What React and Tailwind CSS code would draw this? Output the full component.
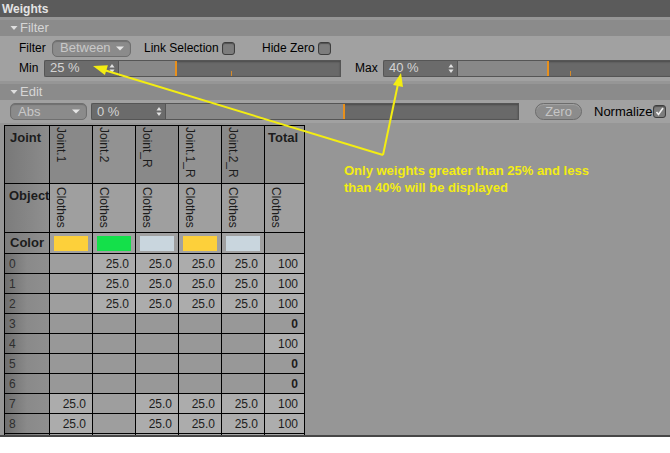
import React from 'react';

const YEL = '#f3ed12';

// weights per joint column, last value is the total
const rows = [
    [null, 25, 25, 25, 25, 100],
    [null, 25, 25, 25, 25, 100],
    [null, 25, 25, 25, 25, 100],
    [null, null, null, null, null, 0],
    [null, null, null, null, null, 100],
    [null, null, null, null, null, 0],
    [null, null, null, null, null, 0],
    [25, null, 25, 25, 25, 100],
    [25, null, 25, 25, 25, 100],
];

const joints = ['Joint.1', 'Joint.2', 'Joint_R', 'Joint.1_R', 'Joint.2_R'];
const swatches = ['#fdd03a', '#14e04a', '#c9d6de', '#fdd03a', '#c9d6de'];

const Tri = () => (
    <svg width="8" height="6" viewBox="0 0 8 6" className="mr-[2px]">
        <path d="M0.5 1 L7.5 1 L4 5 Z" fill="#dedede" />
    </svg>
);

const Stepper = () => (
    <svg width="6" height="11" viewBox="0 0 6 11">
        <path d="M0.5 4.5 L3 1 L5.5 4.5 Z" fill="#e2e2e2" />
        <path d="M0.5 6.5 L3 10 L5.5 6.5 Z" fill="#e2e2e2" />
    </svg>
);

const DropArrow = () => (
    <svg width="8" height="5" viewBox="0 0 8 5">
        <path d="M0 0.5 L8 0.5 L4 4.5 Z" fill="#e6e6e6" />
    </svg>
);

const GroupHeader = ({ label }) => (
    <div className="h-[19px] border-t-[3px] border-[#969696] bg-[#8b8b8b] flex items-center pl-[10px] text-[13px] text-[#d6d6d6]">
        <Tri />
        <span>{label}</span>
    </div>
);

const Dropdown = ({ label, className }) => (
    <div className={`shrink-0 h-[17px] rounded-[5px] border border-[#6f6f6f] bg-[#8b8b8b] shadow-[inset_0_1px_1px_rgba(0,0,0,0.2)] flex items-center justify-between pl-[7px] pr-[6px] text-[13px] text-[#c8c8c8] ${className}`}>
        <span>{label}</span>
        <DropArrow />
    </div>
);

const Checkbox = ({ checked }) => (
    <div className="shrink-0 w-[13px] h-[13px] rounded-[3px] border border-[#3e3e3e] bg-[#7d7d7d] shadow-[inset_0_1px_1px_rgba(0,0,0,0.35)] flex items-center justify-center">
        {checked && (
            <svg width="11" height="11" viewBox="0 0 11 11">
                <path d="M2.5 6 L4.5 8.5 L9 2" stroke="#f0f0f0" strokeWidth="1.6" fill="none" />
            </svg>
        )}
    </div>
);

// numeric field + slider track with an orange marker
const ValueSlider = ({ value, inputW, trackW, fill, tick }) => (
    <div className="flex h-[17px] shrink-0">
        <div className={`${inputW} shrink-0 h-full bg-[#6b6b6b] border border-[#555] border-r-0 rounded-l-[2px] flex items-center justify-between pl-[5px] pr-[3px] text-[13px] text-[#d4d4d4]`}>
            <span>{value}</span>
            <Stepper />
        </div>
        <div className={`${trackW} shrink-0 h-full relative bg-[#696969] border border-[#555] overflow-hidden shadow-[inset_0_1px_2px_rgba(0,0,0,0.3)]`}>
            <div className="absolute left-0 top-0 bottom-0 bg-[#888888]" style={{ width: fill }} />
            <div className="absolute top-0 bottom-0 w-[2px] bg-[#e8901c]" style={{ left: fill }} />
            {tick != null && <div className="absolute bottom-0 h-[5px] w-px bg-[#d58a2a]" style={{ left: tick }} />}
        </div>
    </div>
);

const cellBase = 'flex items-center justify-end pr-[6px] text-[#1c1c1c]';

export default function App() {
    return (
        <div className="relative w-[670px] h-[453px] overflow-hidden bg-white font-['Liberation_Sans',Arial,sans-serif] text-[12px]">
            {/* title */}
            <div className="h-[17px] bg-[#5b5b5b] flex items-center pl-[2px] text-[12px] font-bold text-[#e4e4e4]">
                Weights
            </div>

            <GroupHeader label="Filter" />
            <div className="h-[45px] bg-[#a1a1a1] pl-[19px] pt-[3px] flex flex-col gap-[2px] text-black overflow-hidden">
                <div className="flex items-center h-[18px]">
                    <span className="shrink-0 w-[33px]">Filter</span>
                    <Dropdown label="Between" className="w-[79px]" />
                    <span className="shrink-0 ml-[13px] w-[78px]">Link Selection</span>
                    <Checkbox />
                    <span className="shrink-0 ml-[27px] w-[56px]">Hide Zero</span>
                    <Checkbox />
                </div>
                <div className="flex items-center h-[18px]">
                    <span className="shrink-0 w-[25px]">Min</span>
                    <ValueSlider value="25 %" inputW="w-[74px]" trackW="w-[223px]" fill={56} tick={112} />
                    <span className="shrink-0 ml-[14px] w-[28px]">Max</span>
                    <ValueSlider value="40 %" inputW="w-[74px]" trackW="w-[240px]" fill={89} tick={112} />
                </div>
            </div>

            <GroupHeader label="Edit" />
            <div className="h-[23px] bg-[#a1a1a1] flex items-center pl-[10px] text-black overflow-hidden">
                <Dropdown label="Abs" className="w-[77px] mr-[4px]" />
                <ValueSlider value="0 %" inputW="w-[74px]" trackW="w-[354px]" fill={177} />
                <div className="shrink-0 ml-[16px] w-[47px] h-[17px] rounded-full border border-[#6c6c6c] bg-[#8c8c8c] shadow-[inset_0_1px_1px_rgba(255,255,255,0.2)] flex items-center justify-center text-[13px] text-[#c6c6c6]">
                    Zero
                </div>
                <span className="shrink-0 ml-[12px] w-[59px] text-[13px]">Normalize</span>
                <Checkbox checked />
            </div>

            {/* table panel */}
            <div className="h-[312px] bg-[#969696] pl-[4px] pt-[2px] overflow-hidden">
                <div className="w-[301px] grid grid-cols-[44px_42px_42px_42px_42px_42px_39px] grid-rows-[57px_48px_20px] auto-rows-[19px] gap-px bg-black border border-black text-[#1c1c1c]">
                    {/* joint row */}
                    <div className="bg-linear-to-r from-[#787878] to-[#8c8c8c] pl-[5px] pt-[2px] font-bold text-[13px]">Joint</div>
                    {joints.map((j, i) => (
                        <div key={j} className={`${i % 2 ? 'bg-[#929292]' : 'bg-[#898989]'} flex items-start pl-[4px] pt-[1px]`}>
                            <span className="[writing-mode:vertical-rl] leading-[14px]">{j}</span>
                        </div>
                    ))}
                    <div className="bg-[#8d8d8d] pl-[3px] pt-[2px] font-bold text-[13px]">Total</div>

                    {/* object row */}
                    <div className="bg-linear-to-r from-[#7c7c7c] to-[#909090] pl-[4px] pt-[2px] font-bold text-[13px]">Object</div>
                    {[0, 1, 2, 3, 4, 5].map(i => (
                        <div key={i} className="bg-[#9f9f9f] flex items-start pl-[4px] pt-[3px]">
                            <span className="[writing-mode:vertical-rl] leading-[14px]">Clothes</span>
                        </div>
                    ))}

                    {/* color row */}
                    <div className="bg-linear-to-r from-[#7c7c7c] to-[#909090] pl-[5px] flex items-center font-bold text-[13px]">Color</div>
                    {swatches.map((c, i) => (
                        <div key={i} className="bg-[#a0a0a0] flex items-center justify-center">
                            <div className="w-[34px] h-[15px]" style={{ background: c }} />
                        </div>
                    ))}
                    <div className="bg-[#9a9a9a]" />

                    {/* data rows */}
                    {rows.map((r, ri) => {
                        const hasAny = r.slice(0, 5).some(v => v != null);
                        return (
                            <React.Fragment key={ri}>
                                <div className="bg-linear-to-r from-[#6f6f6f] via-[#8a8a8a] to-[#8f8f8f] pl-[4px] flex items-center text-[#2e2e2e]">{ri}</div>
                                {r.slice(0, 5).map((v, ci) => (
                                    <div
                                        key={ci}
                                        className={`${cellBase} ${v != null ? 'bg-[#acacac]' : hasAny ? 'bg-[#9e9e9e]' : 'bg-[#989898]'}`}
                                    >
                                        {v != null ? v.toFixed(1) : ''}
                                    </div>
                                ))}
                                <div className={`${cellBase} ${r[5] ? 'bg-[#adadad]' : 'bg-[#9a9a9a] font-bold'}`}>
                                    {r[5]}
                                </div>
                            </React.Fragment>
                        );
                    })}
                    {/* next row, scrolled just out of view */}
                    <div className="bg-linear-to-r from-[#6f6f6f] to-[#8f8f8f]" />
                    {[0, 1, 2, 3, 4, 5].map(i => (
                        <div key={i} className="bg-[#a6a6a6]" />
                    ))}
                </div>
            </div>
            <div className="h-[2px] bg-[#474747]" />

            {/* annotation */}
            <svg className="absolute inset-0 pointer-events-none" width="670" height="453" viewBox="0 0 670 453">
                <line x1="383" y1="155" x2="104" y2="70" stroke={YEL} strokeWidth="2" />
                <line x1="383" y1="155" x2="398" y2="84" stroke={YEL} strokeWidth="2" />
                <path d="M93 66 L107.9 65.3 L104.9 74.9 Z" fill={YEL} />
                <path d="M401 73 L403 87 L393 85 Z" fill={YEL} />
            </svg>
            <div className="absolute left-[344px] top-[162px] text-[13px] leading-[17px] font-bold font-['Liberation_Sans',sans-serif]" style={{ color: YEL }}>
                Only weights greater than 25% and less
                <br />
                than 40% will be displayed
            </div>
        </div>
    );
}
